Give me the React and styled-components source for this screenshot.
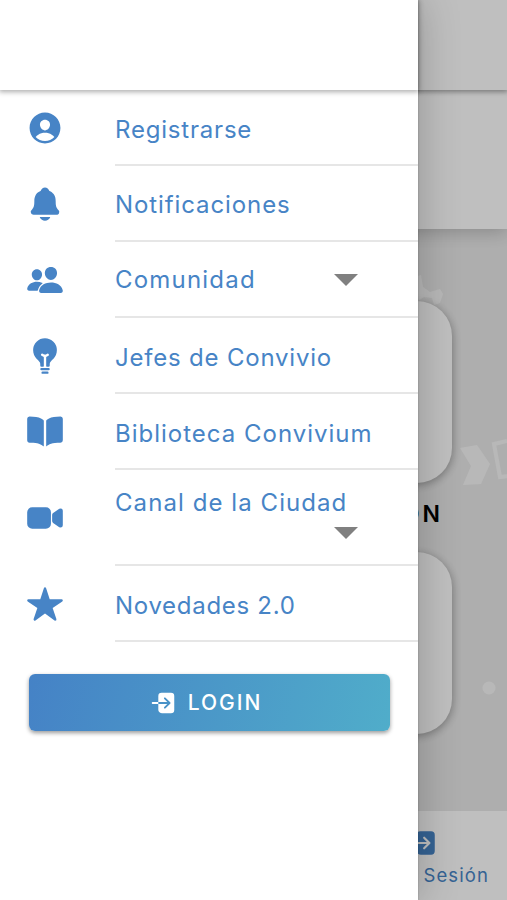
import React from 'react';
import styled, { createGlobalStyle } from 'styled-components';
import {
  IoPersonCircle, IoNotifications, IoPeople, IoBulb, IoBook, IoVideocam, IoStar, IoLogIn,
} from 'react-icons/io5';

const GlobalStyle = createGlobalStyle`
  * {
    box-sizing: border-box;
  }

  body {
    margin: 0;
    overflow: hidden;
    font-family: Inter, "Liberation Sans", sans-serif;
  }
`;

const Screen = styled.div`
  position: relative;
  width: 507px;
  height: 900px;
  overflow: hidden;
`;

const Page = styled.div`
  display: flex;
  flex-direction: column;
  height: 100%;
  background: #e9e9e9;
  isolation: isolate;
`;

const PageHeader = styled.header`
  flex: none;
  height: 90px;
  background: #fff;
  box-shadow: 0 1px 5px 1px rgba(0, 0, 0, 0.36);
  z-index: 2;
`;

const Banner = styled.div`
  flex: none;
  height: 139px;
  background: #fff;
  box-shadow: 0 2px 18px rgba(0, 0, 0, 0.24);
  z-index: 1;
`;

const Content = styled.main`
  position: relative;
  flex: 1;
  display: flex;
  flex-direction: column;
  align-items: flex-end;
  padding: 72px 55px 0 0;
`;

const Pattern = styled.svg`
  position: absolute;
  inset: 0;
  width: 507px;
  height: 581px;
`;

const Card = styled.div`
  position: relative;
  flex: none;
  width: 184px;
  height: 182px;
  border-radius: 35px;
  background: #fff;
  box-shadow: 1px 2px 9px rgba(0, 0, 0, 0.3);
`;

const CardTitle = styled.div`
  position: relative;
  flex: none;
  height: 69px;
  padding: 15px 9px 0 0;
  color: #000;
  font-size: 23px;
  font-weight: 600;
  line-height: 32px;
  letter-spacing: 3px;
`;

const TabBar = styled.nav`
  flex: none;
  display: flex;
  justify-content: flex-end;
  height: 89px;
  padding: 15px 18px 0 0;
  background: #fff;
`;

const Tab = styled.div`
  display: flex;
  flex-direction: column;
  align-items: flex-start;
  color: #4784c6;
  font-size: 18.5px;
  line-height: 30px;
  letter-spacing: 1.1px;

  svg {
    width: 34px;
    height: 34px;
    margin-left: -18px;
  }
`;

const Backdrop = styled.div`
  position: absolute;
  inset: 0;
  background: rgba(0, 0, 0, 0.25);
`;

const Drawer = styled.aside`
  position: absolute;
  top: 0;
  left: 0;
  width: 418px;
  height: 100%;
  background: #fff;
  box-shadow: 0 0 40px rgba(0, 0, 0, 0.24), 0 0 2px rgba(0, 0, 0, 0.25);
`;

const DrawerHeader = styled.div`
  height: 90px;
  box-shadow: 0 1px 5px 1px rgba(0, 0, 0, 0.32);
`;

const Item = styled.div`
  display: grid;
  grid-template-columns: 115px minmax(0, 1fr);
  height: ${props => props.$height}px;
`;

const ItemIcon = styled.div`
  display: flex;
  align-items: center;
  padding-left: 26px;
  color: #4784c6;

  svg {
    width: 38px;
    height: 38px;
  }
`;

const ItemBody = styled.div`
  display: flex;
  flex-wrap: wrap;
  align-content: ${props => (props.$wrapped ? 'flex-start' : 'center')};
  align-items: center;
  padding: ${props => props.$top}px 60px 0 0;
  border-bottom: 2px solid #e6e6e6;
`;

const Label = styled.span`
  width: ${props => (props.$wide ? '100%' : 'auto')};
  color: #4784c6;
  font-size: 24px;
  line-height: 32px;
  letter-spacing: ${props => props.$spacing}px;
  white-space: nowrap;
`;

const Caret = styled.span`
  margin-left: auto;
  margin-top: ${props => (props.$wrapped ? '8px' : '0')};
  border: 12px solid transparent;
  border-top-color: #808080;
  border-bottom: 0;
`;

const LoginButton = styled.button`
  display: flex;
  align-items: center;
  justify-content: center;
  gap: 10px;
  width: 361px;
  height: 57px;
  margin: 32px 0 0 29px;
  padding: 0 9px 0 0;
  border: 0;
  border-radius: 6px;
  background: linear-gradient(105deg, #4582c6, #50adca);
  box-shadow: 0 2px 4px rgba(0, 0, 0, 0.4);
  color: #fff;
  font-family: inherit;
  font-size: 21px;
  font-weight: 500;
  letter-spacing: 2px;

  svg {
    width: 30px;
    height: 30px;
  }
`;

const items = [
  { label: 'Registrarse', icon: IoPersonCircle, spacing: 0.8, top: 5 },
  { label: 'Notificaciones', icon: IoNotifications, spacing: 0.9, top: 4 },
  { label: 'Comunidad', icon: IoPeople, spacing: 1.2, top: 1, caret: true },
  { label: 'Jefes de Convivio', icon: IoBulb, spacing: 0.8, top: 5 },
  { label: 'Biblioteca Convivium', icon: IoBook, spacing: 1, top: 5 },
  { label: 'Canal de la Ciudad', icon: IoVideocam, spacing: 1.07, top: 17, caret: true, wrapped: true, height: 96 },
  { label: 'Novedades 2.0', icon: IoStar, spacing: 0.7, top: 5 },
];

const MenuItem = ({
  label, icon: Icon, spacing, top, caret, wrapped, height = 76,
}) => (
  <Item $height={height}>
    <ItemIcon>
      <Icon />
    </ItemIcon>
    <ItemBody $wrapped={wrapped} $top={top}>
      <Label $spacing={spacing} $wide={wrapped}>{label}</Label>
      {caret && <Caret $wrapped={wrapped} />}
    </ItemBody>
  </Item>
);

const App = () => (
  <Screen>
    <GlobalStyle />
    <Page>
      <PageHeader />
      <Banner />
      <Content>
        <Pattern viewBox="0 0 507 581" fill="#f6f6f6">
          <path d="M418 47l3-1 2 12 7 5 10-3 3 5-3 9-6 2-2-7-8-1-6 4z" />
          <path d="M460 219l17-3 13 19-9 20-18 1 8-19z" />
          <path d="M507 212l-13 3 6 33 9-1" fill="none" stroke="#f6f6f6" strokeWidth="4" />
          <circle cx="489" cy="459" r="6.5" />
        </Pattern>
        <Card />
        <CardTitle>ON</CardTitle>
        <Card />
      </Content>
      <TabBar>
        <Tab>
          <IoLogIn />
          Sesión
        </Tab>
      </TabBar>
    </Page>
    <Backdrop />
    <Drawer>
      <DrawerHeader />
      {items.map(item => <MenuItem key={item.label} {...item} />)}
      <LoginButton type="button">
        <IoLogIn />
        LOGIN
      </LoginButton>
    </Drawer>
  </Screen>
);

export default App;
